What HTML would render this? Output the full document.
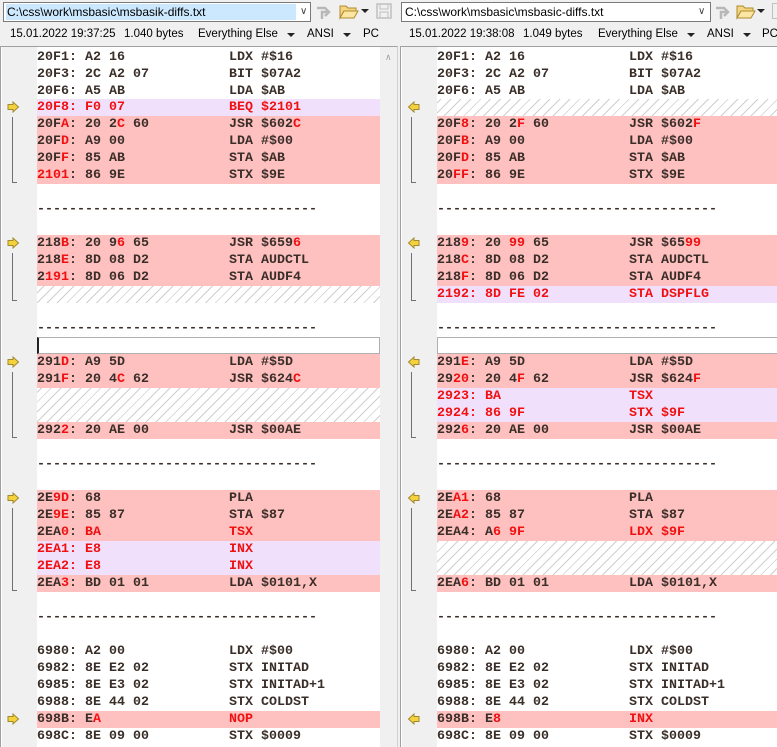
<!DOCTYPE html>
<html><head><meta charset="utf-8"><style>
*{margin:0;padding:0;box-sizing:border-box}
body{width:777px;height:747px;background:#f0f0f0;position:relative;overflow:hidden;font-family:"Liberation Sans",sans-serif;}
.abs{position:absolute}
.combo{position:absolute;top:2px;height:20px;background:#fff;border:1px solid #7a7a7a;font-size:12px;line-height:18px;color:#000}
.combo .sel{position:absolute;left:2px;top:1px;height:16px;background:#cce8ff;padding-left:1px;line-height:16px}
.combo .chev{position:absolute;top:0;font-size:10px;color:#444}
.st{position:absolute;top:26px;font-size:11.5px;line-height:17px;color:#000;white-space:pre}
.tri{position:absolute;top:33px;width:0;height:0;border-left:4px solid transparent;border-right:4px solid transparent;border-top:4px solid #222}
.pane{position:absolute;top:48px;height:699px;background:#fff;overflow:hidden}
.row{position:absolute;left:0;right:0;height:17px;font-family:"Liberation Mono","Courier New",monospace;font-size:13.33px;font-weight:bold;line-height:17px;color:#3a2e28;white-space:pre}
.row .m{position:absolute;left:192px;top:0}
.row span.a{position:absolute;left:0;top:0}
.r{background:#ffc0c0}
.p{background:#f0e0fc}
.p span{color:#f01010}
.h{background:repeating-linear-gradient(-45deg,#fff 0,#fff 4px,#cfcfcf 4px,#cfcfcf 5px,#fff 5px,#fff 7px)}
i{font-style:normal;color:#f01010}
.gut{position:absolute;top:47px;width:35px;height:700px;background:#f0f0f0}
.vl{position:absolute;width:1px;background:#707070}
.tk{position:absolute;height:1px;width:5px;background:#707070}
</style></head><body>

<div class="combo" style="left:3px;width:308px"><div class="sel" style="width:290px">C:\css\work\msbasic\msbasik-diffs.txt</div><div class="chev" style="left:296px">&#x2228;</div></div>
<svg class="abs" style="left:314px;top:3px" width="20" height="18"><path d="M3 5h8l4 4-4 4M15 9H8v7" stroke="#b8b8b8" stroke-width="2.5" fill="none"/></svg>
<svg class="abs" style="left:339px;top:3px" width="20" height="17"><path d="M1 3h6l2 2h8v3H5L1 15z" fill="#f5d680" stroke="#b08a30"/><path d="M5 8h14l-4 7H1z" fill="#fbe6a4" stroke="#b08a30"/></svg>
<div class="tri" style="left:361px;top:9px"></div>
<svg class="abs" style="left:376px;top:3px" width="16" height="16"><rect x="1" y="1" width="14" height="14" fill="none" stroke="#c0c0c0" stroke-width="1.5"/><rect x="4" y="1" width="8" height="5" fill="none" stroke="#c0c0c0"/><rect x="4" y="9" width="8" height="6" fill="none" stroke="#c0c0c0"/></svg>

<div class="combo" style="left:401px;width:310px"><div style="position:absolute;left:3px;top:0">C:\css\work\msbasic\msbasic-diffs.txt</div><div class="chev" style="left:296px">&#x2228;</div></div>
<svg class="abs" style="left:713px;top:3px" width="20" height="18"><path d="M3 5h8l4 4-4 4M15 9H8v7" stroke="#b8b8b8" stroke-width="2.5" fill="none"/></svg>
<svg class="abs" style="left:736px;top:3px" width="20" height="17"><path d="M1 3h6l2 2h8v3H5L1 15z" fill="#f5d680" stroke="#b08a30"/><path d="M5 8h14l-4 7H1z" fill="#fbe6a4" stroke="#b08a30"/></svg>
<div class="tri" style="left:757px;top:9px"></div>
<div class="abs" style="left:772px;top:3px;width:5px;height:16px;border:1.5px solid #c0c0c0;border-right:none"></div>

<div class="st" style="left:10px">15.01.2022 19:37:25</div>
<div class="st" style="left:124px">1.040 bytes</div>
<div class="st" style="left:198px">Everything Else</div>
<div class="tri" style="left:287px"></div>
<div class="st" style="left:307px">ANSI</div>
<div class="tri" style="left:343px"></div>
<div class="st" style="left:363px">PC</div>
<div class="st" style="left:409px">15.01.2022 19:38:08</div>
<div class="st" style="left:523px">1.049 bytes</div>
<div class="st" style="left:598px">Everything Else</div>
<div class="tri" style="left:687px"></div>
<div class="st" style="left:707px">ANSI</div>
<div class="tri" style="left:743px"></div>
<div class="st" style="left:762px">PC</div>

<div class="abs" style="left:0;top:46px;width:398px;height:701px;border:1px solid #a0a0a0;border-right:1px solid #d0d0d0;border-bottom:none;background:#fff"></div>
<div class="abs" style="left:400px;top:46px;width:377px;height:701px;border-left:1px solid #a0a0a0;border-top:1px solid #a0a0a0;background:#fff"></div>
<div class="gut" style="left:2px"></div>
<div class="gut" style="left:402px"></div>
<div class="abs" style="left:380px;top:47px;width:17px;height:700px;background:#f0f0f0"></div>
<div class="abs" style="left:385px;top:52px;font-size:9px;color:#a0a0a0">&#x2227;</div>

<div class="pane" style="left:37px;width:343px">
<div class="row" style="top:1px"><span class="a">20F1: A2 16</span><span class="m">LDX #$16</span></div>
<div class="row" style="top:18px"><span class="a">20F3: 2C A2 07</span><span class="m">BIT $07A2</span></div>
<div class="row" style="top:35px"><span class="a">20F6: A5 AB</span><span class="m">LDA $AB</span></div>
<div class="row p" style="top:51px"><span class="a">20F8: F0 07</span><span class="m">BEQ $2101</span></div>
<div class="row r" style="top:68px"><span class="a">20F<i>A</i>: 20 2<i>C</i> 60</span><span class="m">JSR $602<i>C</i></span></div>
<div class="row r" style="top:85px"><span class="a">20F<i>D</i>: A9 00</span><span class="m">LDA #$00</span></div>
<div class="row r" style="top:102px"><span class="a">20F<i>F</i>: 85 AB</span><span class="m">STA $AB</span></div>
<div class="row r" style="top:119px"><span class="a"><i>2101</i>: 86 9E</span><span class="m">STX $9E</span></div>
<div class="row" style="top:153px"><span class="a">-----------------------------------</span></div>
<div class="row r" style="top:187px"><span class="a">218<i>B</i>: 20 9<i>6</i> 65</span><span class="m">JSR $659<i>6</i></span></div>
<div class="row r" style="top:204px"><span class="a">218<i>E</i>: 8D 08 D2</span><span class="m">STA AUDCTL</span></div>
<div class="row r" style="top:221px"><span class="a">2<i>191</i>: 8D 06 D2</span><span class="m">STA AUDF4</span></div>
<div class="row h" style="top:238px"></div>
<div class="row" style="top:272px"><span class="a">-----------------------------------</span></div>
<div class="row" style="top:289px;border:1px solid #b0b0b0;border-left:2px solid #222"></div>
<div class="row r" style="top:306px"><span class="a">291<i>D</i>: A9 5D</span><span class="m">LDA #$5D</span></div>
<div class="row r" style="top:323px"><span class="a">291<i>F</i>: 20 4<i>C</i> 62</span><span class="m">JSR $624<i>C</i></span></div>
<div class="row h" style="top:340px;height:34px"></div>
<div class="row r" style="top:374px"><span class="a">292<i>2</i>: 20 AE 00</span><span class="m">JSR $00AE</span></div>
<div class="row" style="top:408px"><span class="a">-----------------------------------</span></div>
<div class="row r" style="top:442px"><span class="a">2E<i>9D</i>: 68</span><span class="m">PLA</span></div>
<div class="row r" style="top:459px"><span class="a">2E<i>9E</i>: 85 87</span><span class="m">STA $87</span></div>
<div class="row r" style="top:476px"><span class="a">2EA<i>0</i>: <i>BA</i></span><span class="m"><i>TSX</i></span></div>
<div class="row p" style="top:493px"><span class="a">2EA1: E8</span><span class="m">INX</span></div>
<div class="row p" style="top:510px"><span class="a">2EA2: E8</span><span class="m">INX</span></div>
<div class="row r" style="top:527px"><span class="a">2EA<i>3</i>: BD 01 01</span><span class="m">LDA $0101,X</span></div>
<div class="row" style="top:561px"><span class="a">-----------------------------------</span></div>
<div class="row" style="top:595px"><span class="a">6980: A2 00</span><span class="m">LDX #$00</span></div>
<div class="row" style="top:612px"><span class="a">6982: 8E E2 02</span><span class="m">STX INITAD</span></div>
<div class="row" style="top:629px"><span class="a">6985: 8E E3 02</span><span class="m">STX INITAD+1</span></div>
<div class="row" style="top:646px"><span class="a">6988: 8E 44 02</span><span class="m">STX COLDST</span></div>
<div class="row r" style="top:663px"><span class="a">698B: E<i>A</i></span><span class="m"><i>NOP</i></span></div>
<div class="row" style="top:680px"><span class="a">698C: 8E 09 00</span><span class="m">STX $0009</span></div>
</div>

<div class="pane" style="left:437px;width:340px">
<div class="row" style="top:1px"><span class="a">20F1: A2 16</span><span class="m">LDX #$16</span></div>
<div class="row" style="top:18px"><span class="a">20F3: 2C A2 07</span><span class="m">BIT $07A2</span></div>
<div class="row" style="top:35px"><span class="a">20F6: A5 AB</span><span class="m">LDA $AB</span></div>
<div class="row h" style="top:51px"></div>
<div class="row r" style="top:68px"><span class="a">20F<i>8</i>: 20 2<i>F</i> 60</span><span class="m">JSR $602<i>F</i></span></div>
<div class="row r" style="top:85px"><span class="a">20F<i>B</i>: A9 00</span><span class="m">LDA #$00</span></div>
<div class="row r" style="top:102px"><span class="a">20F<i>D</i>: 85 AB</span><span class="m">STA $AB</span></div>
<div class="row r" style="top:119px"><span class="a">20<i>FF</i>: 86 9E</span><span class="m">STX $9E</span></div>
<div class="row" style="top:153px"><span class="a">-----------------------------------</span></div>
<div class="row r" style="top:187px"><span class="a">218<i>9</i>: 20 <i>99</i> 65</span><span class="m">JSR $65<i>99</i></span></div>
<div class="row r" style="top:204px"><span class="a">218<i>C</i>: 8D 08 D2</span><span class="m">STA AUDCTL</span></div>
<div class="row r" style="top:221px"><span class="a">218<i>F</i>: 8D 06 D2</span><span class="m">STA AUDF4</span></div>
<div class="row p" style="top:238px"><span class="a">2192: 8D FE 02</span><span class="m">STA DSPFLG</span></div>
<div class="row" style="top:272px"><span class="a">-----------------------------------</span></div>
<div class="row" style="top:289px;border:1px solid #b0b0b0;border-right:none"></div>
<div class="row r" style="top:306px"><span class="a">291<i>E</i>: A9 5D</span><span class="m">LDA #$5D</span></div>
<div class="row r" style="top:323px"><span class="a">29<i>20</i>: 20 4<i>F</i> 62</span><span class="m">JSR $624<i>F</i></span></div>
<div class="row p" style="top:340px"><span class="a">2923: BA</span><span class="m">TSX</span></div>
<div class="row p" style="top:357px"><span class="a">2924: 86 9F</span><span class="m">STX $9F</span></div>
<div class="row r" style="top:374px"><span class="a">292<i>6</i>: 20 AE 00</span><span class="m">JSR $00AE</span></div>
<div class="row" style="top:408px"><span class="a">-----------------------------------</span></div>
<div class="row r" style="top:442px"><span class="a">2E<i>A1</i>: 68</span><span class="m">PLA</span></div>
<div class="row r" style="top:459px"><span class="a">2E<i>A2</i>: 85 87</span><span class="m">STA $87</span></div>
<div class="row r" style="top:476px"><span class="a">2EA4: A<i>6</i> <i>9F</i></span><span class="m"><i>LDX $9F</i></span></div>
<div class="row h" style="top:493px;height:34px"></div>
<div class="row r" style="top:527px"><span class="a">2EA<i>6</i>: BD 01 01</span><span class="m">LDA $0101,X</span></div>
<div class="row" style="top:561px"><span class="a">-----------------------------------</span></div>
<div class="row" style="top:595px"><span class="a">6980: A2 00</span><span class="m">LDX #$00</span></div>
<div class="row" style="top:612px"><span class="a">6982: 8E E2 02</span><span class="m">STX INITAD</span></div>
<div class="row" style="top:629px"><span class="a">6985: 8E E3 02</span><span class="m">STX INITAD+1</span></div>
<div class="row" style="top:646px"><span class="a">6988: 8E 44 02</span><span class="m">STX COLDST</span></div>
<div class="row r" style="top:663px"><span class="a">698B: E<i>8</i></span><span class="m"><i>INX</i></span></div>
<div class="row" style="top:680px"><span class="a">698C: 8E 09 00</span><span class="m">STX $0009</span></div>
</div>

<svg class="abs" style="left:7px;top:101px" width="13" height="12"><path d="M1 3.5h5V1l5.5 5-5.5 5V8.5H1z" fill="#f5d23c" stroke="#a08a30"/></svg>
<div class="vl" style="left:12px;top:117px;height:66px"></div><div class="tk" style="left:12px;top:182px"></div>
<svg class="abs" style="left:7px;top:237px" width="13" height="12"><path d="M1 3.5h5V1l5.5 5-5.5 5V8.5H1z" fill="#f5d23c" stroke="#a08a30"/></svg>
<div class="vl" style="left:12px;top:253px;height:48px"></div><div class="tk" style="left:12px;top:300px"></div>
<svg class="abs" style="left:7px;top:356px" width="13" height="12"><path d="M1 3.5h5V1l5.5 5-5.5 5V8.5H1z" fill="#f5d23c" stroke="#a08a30"/></svg>
<div class="vl" style="left:12px;top:372px;height:66px"></div><div class="tk" style="left:12px;top:437px"></div>
<svg class="abs" style="left:7px;top:492px" width="13" height="12"><path d="M1 3.5h5V1l5.5 5-5.5 5V8.5H1z" fill="#f5d23c" stroke="#a08a30"/></svg>
<div class="vl" style="left:12px;top:508px;height:83px"></div><div class="tk" style="left:12px;top:590px"></div>
<svg class="abs" style="left:7px;top:713px" width="13" height="12"><path d="M1 3.5h5V1l5.5 5-5.5 5V8.5H1z" fill="#f5d23c" stroke="#a08a30"/></svg>

<svg class="abs" style="left:407px;top:101px" width="13" height="12"><path d="M12 3.5H7V1L1.5 6 7 11V8.5h5z" fill="#f5d23c" stroke="#a08a30"/></svg>
<div class="vl" style="left:411px;top:117px;height:66px"></div><div class="tk" style="left:411px;top:182px"></div>
<svg class="abs" style="left:407px;top:237px" width="13" height="12"><path d="M12 3.5H7V1L1.5 6 7 11V8.5h5z" fill="#f5d23c" stroke="#a08a30"/></svg>
<div class="vl" style="left:411px;top:253px;height:48px"></div><div class="tk" style="left:411px;top:300px"></div>
<svg class="abs" style="left:407px;top:356px" width="13" height="12"><path d="M12 3.5H7V1L1.5 6 7 11V8.5h5z" fill="#f5d23c" stroke="#a08a30"/></svg>
<div class="vl" style="left:411px;top:372px;height:66px"></div><div class="tk" style="left:411px;top:437px"></div>
<svg class="abs" style="left:407px;top:492px" width="13" height="12"><path d="M12 3.5H7V1L1.5 6 7 11V8.5h5z" fill="#f5d23c" stroke="#a08a30"/></svg>
<div class="vl" style="left:411px;top:508px;height:83px"></div><div class="tk" style="left:411px;top:590px"></div>
<svg class="abs" style="left:407px;top:713px" width="13" height="12"><path d="M12 3.5H7V1L1.5 6 7 11V8.5h5z" fill="#f5d23c" stroke="#a08a30"/></svg>
</body></html>
